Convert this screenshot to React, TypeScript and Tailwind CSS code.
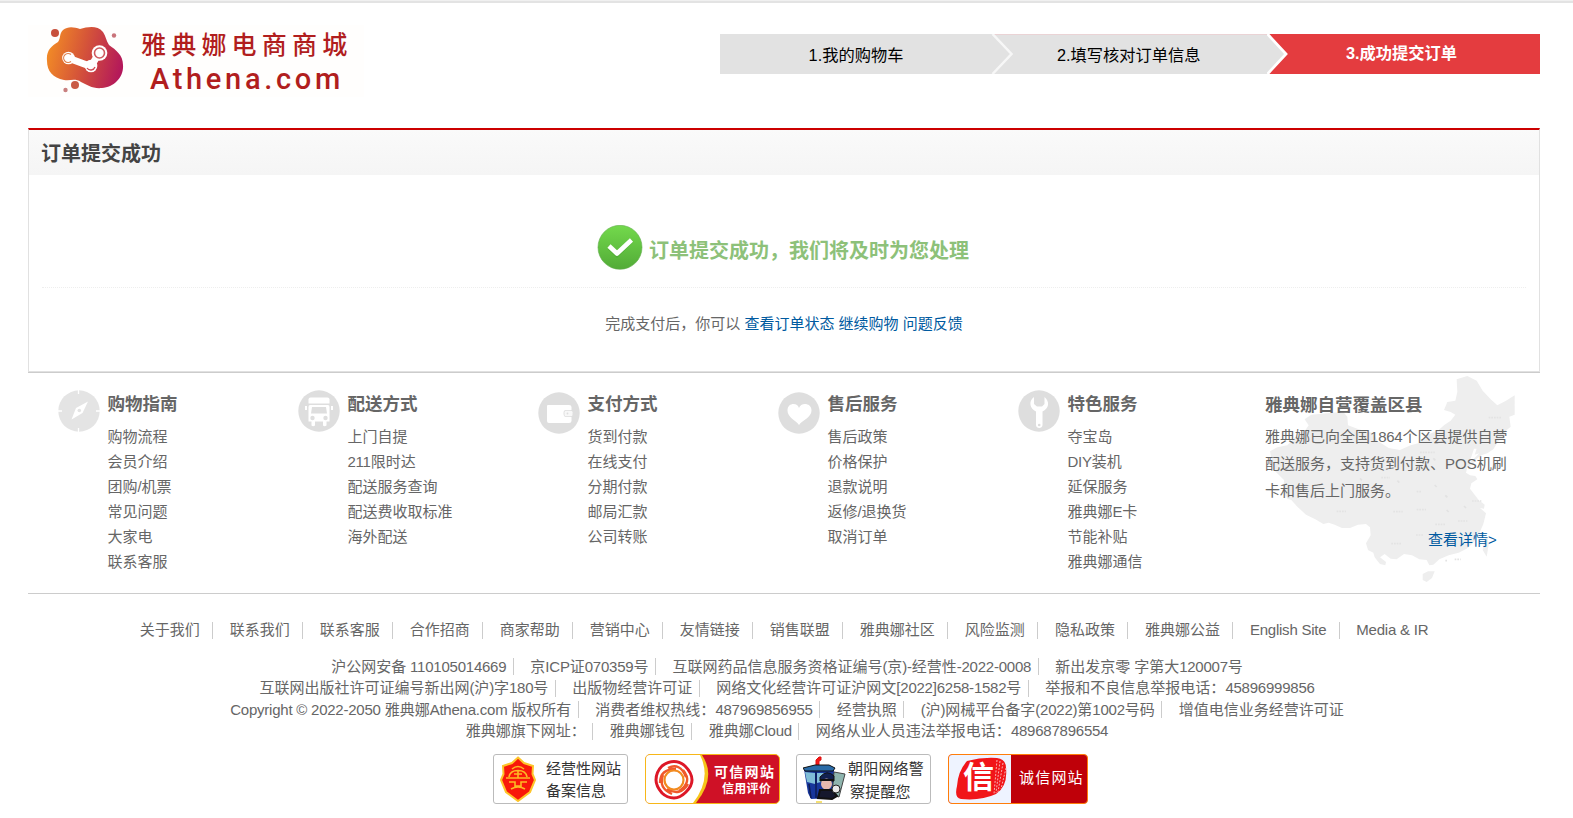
import type { ReactNode } from "react";

const services = [
  { title: "购物指南", icon: <CompassIcon />, items: ["购物流程", "会员介绍", "团购/机票", "常见问题", "大家电", "联系客服"] },
  { title: "配送方式", icon: <BusIcon />, items: ["上门自提", "211限时达", "配送服务查询", "配送费收取标准", "海外配送"] },
  { title: "支付方式", icon: <WalletIcon />, items: ["货到付款", "在线支付", "分期付款", "邮局汇款", "公司转账"] },
  { title: "售后服务", icon: <HeartIcon />, items: ["售后政策", "价格保护", "退款说明", "返修/退换货", "取消订单"] },
  { title: "特色服务", icon: <WrenchIcon />, items: ["夺宝岛", "DIY装机", "延保服务", "雅典娜E卡", "节能补贴", "雅典娜通信"] },
];

const links = ["关于我们", "联系我们", "联系客服", "合作招商", "商家帮助", "营销中心", "友情链接", "销售联盟", "雅典娜社区", "风险监测", "隐私政策", "雅典娜公益", "English Site", "Media & IR"];

const legal = [
  ["沪公网安备 110105014669", "京ICP证070359号", "互联网药品信息服务资格证编号(京)-经营性-2022-0008", "新出发京零 字第大120007号"],
  ["互联网出版社许可证编号新出网(沪)字180号", "出版物经营许可证", "网络文化经营许可证沪网文[2022]6258-1582号", "举报和不良信息举报电话：45896999856"],
  ["Copyright © 2022-2050 雅典娜Athena.com 版权所有", "消费者维权热线：487969856955", "经营执照", "(沪)网械平台备字(2022)第1002号码", "增值电信业务经营许可证"],
  ["雅典娜旗下网址：", "雅典娜钱包", "雅典娜Cloud", "网络从业人员违法举报电话：489687896554"],
];

/* Tightens Latin runs inside mixed Chinese text. */
function Mixed({ text }: { text: string }) {
  return (
    <span className="whitespace-pre">
      {text.split(/([\x20-\x7e©]+)/).map((part, i) =>
        i % 2 ? <span key={i} className="tracking-[-0.23px]">{part}</span> : part,
      )}
    </span>
  );
}

function Logo() {
  return (
    <div className="flex h-[72px] items-start bg-[#fffefd] pr-3">
      <svg width="84" height="70" viewBox="0 0 84 70" className="ml-[16px] mt-[2px]">
        <defs>
          <linearGradient id="blob" x1="0" x2="1" y1="0.4" y2="0.6">
            <stop offset="0" stopColor="#f28b26" />
            <stop offset="0.45" stopColor="#d65638" />
            <stop offset="1" stopColor="#b3175b" />
          </linearGradient>
        </defs>
        <path fill="url(#blob)" d="M19 3C24-1 30 0 36 2C44 0 53-2 59 5C62 9 62 14 65 18C72 23 79 28 79 38C80 50 70 60 58 61C49 62 43 58 37 55C31 51 27 54 20 53C9 51 3 44 3 34C2 24 7 19 14 15C17 11 15 7 19 3Z" />
        <circle cx="11" cy="6" r="4" fill="#c8503c" />
        <circle cx="70" cy="8.500" r="2.200" fill="#c9737a" />
        <circle cx="31" cy="58" r="4" fill="#c95a45" />
        <circle cx="21.500" cy="63" r="2.200" fill="#c98080" />
        <path d="M24 31L47 39.500L55 26" fill="none" stroke="#fff" strokeWidth="7" strokeLinecap="round" strokeLinejoin="round" />
        <circle cx="24.500" cy="31" r="6.300" fill="#fff" />
        <path d="M27 27.500a4.500 4.500 0 1 0 0 7" fill="none" stroke="#df8050" strokeWidth="1.200" />
        <circle cx="55.500" cy="26" r="7.800" fill="#fff" />
        <circle cx="55.500" cy="26" r="5" fill="none" stroke="#cf5a60" strokeWidth="1.600" />
        <circle cx="47" cy="39" r="6.300" fill="#fff" />
        <path d="M43 41a4.500 4.500 0 0 0 8-1" fill="none" stroke="#cf4b55" strokeWidth="1.300" />
      </svg>
      <div className="ml-[13px] flex flex-col whitespace-nowrap text-[#b11e1e]">
        <span className="mt-[5px] h-[30px] text-[25px] font-medium leading-[30px] tracking-[5.2px]">雅典娜电商商城</span>
        <span className="ml-[9px] h-[36px] font-[Roboto,sans-serif] text-[29px] font-medium leading-[38px] tracking-[3.7px]">Athena.com</span>
      </div>
    </div>
  );
}

function Steps() {
  return (
    <div className="relative mt-[31px] flex h-10 w-[820px] text-[16.25px] leading-[42px] text-black">
      <div className="w-[272px] bg-[#e2e2e2] text-center">1.我的购物车</div>
      <div className="w-[276px] border-t border-[#ead3d5] bg-[#e2e2e2] pl-[65px] leading-[40px]">2.填写核对订单信息</div>
      <div className="w-[272px] bg-[#e43c3f] pl-[78px] font-bold leading-[39px] text-white">3.成功提交订单</div>
      <svg className="absolute left-[271px] top-0" width="24" height="40" viewBox="0 0 24 40">
        <path d="M0 0H2L21 20L2 40H0Z" fill="#e2e2e2" />
        <path d="M1.500 0L20.500 20L1.500 40" fill="none" stroke="#f7f7f7" strokeWidth="2.500" />
      </svg>
      <svg className="absolute left-[547px] top-0" width="24" height="40" viewBox="0 0 24 40">
        <path d="M0 0H1L19 20L1 40H0Z" fill="#e2e2e2" />
        <path d="M0.500 0L19 20L0.500 40" fill="none" stroke="#fff" strokeWidth="2.800" />
      </svg>
    </div>
  );
}

function Disc({ children, fill = "#dedede" }: { children: ReactNode; fill?: string }) {
  return (
    <svg width="42" height="42" viewBox="0 0 42 42" className="shrink-0">
      <circle cx="21" cy="21" r="20.700" fill={fill} />
      {children}
    </svg>
  );
}

function CompassIcon() {
  return (
    <Disc fill="#e4e4e4">
      <path d="M20.500 0V4M20.500 38V42M0 21H4M38 21H42" stroke="#fff" strokeWidth="1.300" />
      <path d="M30 11.500L24.500 23L13.500 29.500L18 18Z" fill="#fff" />
      <circle cx="21.300" cy="20.500" r="1.800" fill="#e4e4e4" />
    </Disc>
  );
}

function BusIcon() {
  return (
    <Disc>
      <path d="M12.500 7.500H29.500Q31.500 7.500 31.500 9.500V13.500H10.500V9.500Q10.500 7.500 12.500 7.500Z" fill="#fff" />
      <path d="M12 15H30Q31.500 15 31.500 17V31.500H28.500V35.500Q26.500 37 25 35.500V31.500H17V35.500Q15 37 13.500 35.500V31.500H10.500V17Q10.500 15 12 15Z" fill="#fff" />
      <path d="M7 16H9V20H7ZM33 16H35V20H33Z" fill="#fff" />
      <path d="M14 17H28L29 23.500H13Z" fill="#dedede" />
      <circle cx="14.500" cy="28" r="2.200" fill="#dedede" />
      <circle cx="27.500" cy="28" r="2.200" fill="#dedede" />
    </Disc>
  );
}

function WalletIcon() {
  return (
    <Disc>
      <path d="M10 13H31Q33.500 13 33.500 15V18H28Q25.500 18 25.500 21Q25.500 25 28 25H33.500V29Q33.500 31 31 31H11Q9 31 9 29V14Q9 13 10 13Z" fill="#fff" />
      <rect x="26.500" y="18.800" width="8" height="5.400" rx="1.500" fill="#f8f8f8" />
      <circle cx="29.500" cy="21.500" r=".9" fill="#dedede" />
    </Disc>
  );
}

function HeartIcon() {
  return (
    <Disc>
      <path d="M21 33C18 28.500 9.500 25.500 9.500 18.500C9.500 14 12.500 12 15.500 12C18.500 12 20 13.500 21 16C22 13.500 24 12 27 12C30 12 33.500 14 33.500 18.500C33.500 25.500 24 28.500 21 33Z" fill="#fff" />
    </Disc>
  );
}

function WrenchIcon() {
  return (
    <Disc>
      <path d="M16 7C13 9 12 12 12.500 15C13 18 15 20 18 21.500L18 35C18 39 24.500 39 24.500 35V21.500C27.500 20 29.500 18 30 15C30.500 12 29 9 26.500 7V14L24 16.500H19L16 14Z" fill="#fff" />
      <circle cx="21.200" cy="35" r="1.300" fill="#dedede" />
    </Disc>
  );
}

function ChinaMap() {
  return (
    <svg className="absolute right-[20px] top-[-3px]" width="260" height="215" viewBox="0 0 780 645">
      <g fill="#eee">
        <path d="M590 28L622 18L650 32L668 62L692 88L712 106L738 92L764 76V134L748 140L752 170L736 184L734 204L716 212L700 238L682 250L664 256L648 268L636 284L622 292L618 308L630 316L646 318L652 328L634 340L630 356L642 372L656 390L674 404L672 416L660 414L678 430L670 462L658 490L640 518L620 536L596 548L566 556L538 568L520 584L508 586L500 570L478 568L456 556L432 552L410 568L392 566L374 552L360 562L378 576L376 586L360 582L344 562L340 548L324 540L318 520L332 496L330 472L318 462L294 464L270 474L246 474L224 464L206 458L190 462L166 448L138 434L112 410L94 390L82 386L70 360L72 330L44 302L36 276L30 244L52 232L82 226L104 204L130 190L146 166L134 148L154 134L200 130L250 126L262 140L264 166L296 178L340 190L352 212L386 234L420 240L452 226L480 218L500 196L536 180L552 166L572 152L586 134L572 126L552 120L562 96L586 92L592 66Z" />
        <path d="M488 612L504 604L524 604L516 624L500 636L488 630Z" />
        <path d="M674 506L682 500L686 524L680 560L668 540Z" />
      </g>
      <path d="M634 260L642 236L650 236L644 254L658 250L640 268L624 282Z" fill="#fff" />
      <path d="M686 143h40M480 247h44M400 425h28M230 424h28M468 495h22M394 521h30M526 463h30M594 453h28M636 393h28M470 419h28M364 323h26M470 365h14M584 568h18M556 572h8" stroke="#e3e3e3" strokeWidth="5" strokeDasharray="5 3" />
      <path d="M300 325l6 6M412 332l6 6M556 376l6 6M560 420l6 6M524 345l6 6M520 265l6 6M612 408l6 6" stroke="#e2e2e2" strokeWidth="5" />
    </svg>
  );
}

function SeparatedRow({ items, className }: { items: string[]; className: string }) {
  return (
    <div className={`flex items-center justify-center whitespace-nowrap ${className}`}>
      {items.map((t, i) => (
        <span key={t} className="flex items-center">
          <Mixed text={t} />
          {i < items.length - 1 && <i className="ml-[6.5px] mr-[16.5px] h-[17px] w-px bg-[#ccc]" />}
        </span>
      ))}
    </div>
  );
}

function Badges() {
  return (
    <div className="flex h-[50px] pl-[465px] text-[#333]">
      <div className="flex w-[135px] items-center rounded-[3px] border border-[#bbb]">
        <svg width="38" height="46" viewBox="0 0 38 46" className="ml-[6px]">
          <path d="M18 1.500L24 7L33 10L32.500 18L35 24L30 36L18 45L6 36L1 24L3.500 18L3 10L12 7Z" fill="#f8180a" stroke="#fec52a" strokeWidth="2" />
          <path d="M12 13Q18 8 24 13M9 21Q10 14.500 18 14.500Q26 14.500 27 21M6 22H30M9 26H15V30H21V26H27M11 33Q18 29 25 33M14 18H22M18 14V22" fill="none" stroke="#fdb924" strokeWidth="1.600" />
        </svg>
        <div className="ml-[8px] mt-[2px] whitespace-nowrap text-[15px] leading-[22px]">
          <div>经营性网站</div>
          <div>备案信息</div>
        </div>
      </div>
      <div className="relative ml-[17px] flex w-[135px] overflow-hidden rounded-[5px] border-[1.5px] border-[#f7b718] bg-[#cf1126]">
        <svg width="66" height="48" viewBox="0 0 66 48" className="shrink-0">
          <path d="M0 0H56Q71 22 50 48H0Z" fill="#f6c51a" />
          <path d="M0 0H54Q66 24 47 48H0Z" fill="#fff" />
          <path d="M57 0H66V48H55Q72 20 57 0Z" fill="#cf1126" />
          <g fill="none" strokeWidth="3">
            <path d="M28 6.500Q34 6.500 39 11Q46 18 46 25Q46 31 40 37Q34 43 28 43Q21 43 16 38Q10 31 10 25Q10 17 16 11Q22 6.500 28 6.500Z" stroke="#dd1727" />
            <path d="M22 13Q34 7 40 22M37 15Q47 27 33 36M42 29Q34 42 21 34M26 39Q12 33 17 20M14 28Q14 14 30 14" stroke="#f0582a" strokeWidth="2.400" />
            <circle cx="28" cy="25" r="9.500" stroke="#f28b20" strokeWidth="2.200" />
          </g>
        </svg>
        <div className="ml-[2px] mt-[8px] whitespace-nowrap text-right font-bold text-white">
          <div className="text-[14px] leading-[19px] tracking-[1.3px]">可信网站</div>
          <div className="mr-[4px] text-[12px] leading-[14px] tracking-[0.3px]">信用评价</div>
        </div>
      </div>
      <div className="ml-[16px] flex w-[135px] items-center rounded-[3px] border border-[#bbb]">
        <svg width="44" height="48" viewBox="0 0 44 48" className="ml-[6px] shrink-0">
          <path d="M13 11V5L16 2H18V5L16 6V11Z" fill="#f31919" stroke="#d11" strokeWidth="1" />
          <path d="M1 14L12 10L26 10L31 13V40L27 43L8 44L5 38Z" fill="#17369b" />
          <path d="M0 13L12 10L26 10L32 13L30 16L2 16Z" fill="#2a6ba8" stroke="#111" />
          <path d="M2 17L12 18V29L4 27ZM14 18H22V26L14 28Z" fill="#80bed7" />
          <path d="M13 17V43M6 29L8 43" stroke="#0d1c55" strokeWidth="1.500" />
          <path d="M31 17L42 19L36 42L29 40Z" fill="#8fb5ae" stroke="#444" />
          <path d="M17 22Q24 14 31 21V26H17Z" fill="#122151" stroke="#111" />
          <circle cx="23.500" cy="29" r="5.500" fill="#e7b9ae" />
          <path d="M17 25H31M17 35L29 35L34 41L29 44L15 43Z" fill="#15182d" stroke="#111" strokeWidth="2" />
          <circle cx="33" cy="34" r="4" fill="#e8e8e8" stroke="#222" />
          <path d="M13 47H19" stroke="#f2d645" strokeWidth="1.500" />
        </svg>
        <div className="mt-px whitespace-nowrap text-[15px] leading-[23px] tracking-[0.2px]">
          <div className="ml-px">朝阳网络警</div>
          <div className="ml-[3px]">察提醒您</div>
        </div>
      </div>
      <div className="ml-[17px] flex w-[140px] overflow-hidden rounded-[4px] border-[1.5px] border-[#ff7d0a] bg-[#bf0009]">
        <div className="relative w-[62px] shrink-0 bg-[#eef3ff]">
          <svg width="62" height="48" viewBox="0 0 62 48">
            <path d="M18 6Q33 2 48 3Q57 4 57 13Q59 31 47 39Q32 46 12 44Q5 43 8 31Q9 16 18 6Z" fill="#f11519" />
            <path d="M48 5L45 39M51 6L47 38M54 8L49 37M57 13L52 34" stroke="#f7b0b1" strokeWidth="1" strokeDasharray="2 1.500" />
          </svg>
          <span className="absolute left-[14px] top-[5px] text-[31px] font-bold leading-[36px] text-white">信</span>
        </div>
        <div className="ml-[8px] mt-[12px] whitespace-nowrap text-[15px] leading-[22px] tracking-[1.2px] text-white">诚信网站</div>
      </div>
    </div>
  );
}

export default function App() {
  return (
    <div className="h-[818px] w-full overflow-hidden border-t border-[#f0f0f0] bg-white font-['Liberation_Sans','Noto_Sans_CJK_SC',sans-serif] text-[15px] text-[#666]">
      <div className="h-[2px] bg-[#e3e3e3]" />
      <div className="ml-[28px] w-[1512px]">
        <header className="flex h-[125px] justify-between">
          <div className="pt-[22px]">
            <Logo />
          </div>
          <Steps />
        </header>

        <main className="h-[244px] border-x border-b border-[#e1e1e1] border-t-2 border-t-[#c00]">
          <h1 className="h-[45px] bg-linear-to-b from-[#fafafa] to-[#f5f5f5] pl-3 text-[20px] font-bold leading-[48px] text-[#444]">订单提交成功</h1>
          <div className="mx-[13px] flex h-[113px] items-start justify-center border-b border-dotted border-[#eee] pr-[2px] pt-[50px]">
            <svg width="46" height="46" viewBox="0 0 46 46">
              <defs>
                <linearGradient id="ok" x1="0" x2="0" y1="0" y2="1">
                  <stop offset="0" stopColor="#73d94c" />
                  <stop offset="1" stopColor="#52ab37" />
                </linearGradient>
              </defs>
              <circle cx="23" cy="22.300" r="22" fill="url(#ok)" stroke="#62ad4c" strokeWidth=".6" />
              <path d="M12.500 22.500L20 29.500L34.500 15.500" fill="none" stroke="#3f9a2b" strokeOpacity=".4" strokeWidth="5" />
              <path d="M12 21L20 28.500L34.500 15" fill="none" stroke="#fff" strokeWidth="4.600" strokeLinejoin="round" />
            </svg>
            <h2 className="ml-[6px] mt-[11px] text-[20px] font-bold leading-[30px] text-[#8dc179]">订单提交成功，我们将及时为您处理</h2>
          </div>
          <p className="mt-[24px] text-center leading-[24px]">
            完成支付后，你可以 <a className="text-[#005aa0]">查看订单状态</a> <a className="text-[#005aa0]">继续购物</a> <a className="text-[#005aa0]">问题反馈</a>
          </p>
        </main>

        <footer>
          <section className="relative flex h-[222px] border-y border-[#ccc] pl-[29.5px]">
            <ChinaMap />
            {services.map((s, i) => (
              <div key={s.title} className="flex w-[240px] shrink-0 gap-[8px]">
                <div className={i === 2 || i === 3 ? "pt-[19px]" : "pt-[17px]"}>{s.icon}</div>
                <div className="pt-[18px]">
                  <h3 className="h-[33px] text-[17.5px] font-bold leading-[26px]">{s.title}</h3>
                  {s.items.map((t) => (
                    <div key={t} className="h-[25px] leading-[25px]"><Mixed text={t} /></div>
                  ))}
                </div>
              </div>
            ))}
            <div className="relative ml-[7.5px] w-[246px] shrink-0 pt-[19px]">
              <h3 className="h-[31px] text-[17.5px] font-bold leading-[26px]">雅典娜自营覆盖区县</h3>
              <p className="whitespace-nowrap leading-[27px]"><Mixed text="雅典娜已向全国1864个区县提供自营" /><br />配送服务，支持货到付款、POS机刷<br />卡和售后上门服务。</p>
              <div className="pl-[163px] pt-[22px] leading-[27px] text-[#005aa0]">查看详情&gt;</div>
            </div>
          </section>

          <nav className="mt-[26px] flex h-[20px] items-center justify-center whitespace-nowrap leading-[20px]">
            {links.map((t, i) => (
              <span key={t} className="flex items-center">
                <Mixed text={t} />
                {i < links.length - 1 && <i className="ml-[12.5px] mr-[16.5px] h-[17px] w-px bg-[#ccc]" />}
              </span>
            ))}
          </nav>
          <div className="mt-[16px] flex flex-col pl-[6px]">
            {legal.map((row) => (
              <SeparatedRow key={row[0]} items={row} className="h-[21.5px]" />
            ))}
          </div>
          <div className="mt-[12px]">
            <Badges />
          </div>
        </footer>
      </div>
    </div>
  );
}
